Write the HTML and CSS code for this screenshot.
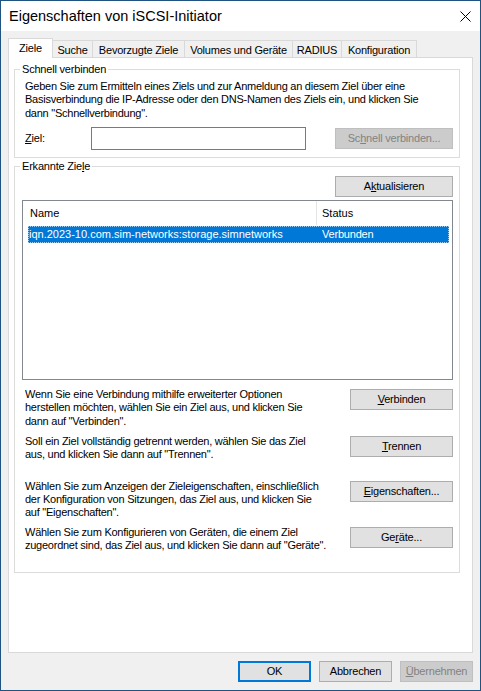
FILE: index.html
```html
<!DOCTYPE html>
<html lang="de">
<head>
<meta charset="utf-8">
<title>Eigenschaften von iSCSI-Initiator</title>
<link rel="stylesheet" href="styles.css">
</head>
<body>
<div class="window">
  <div class="titlebar">
    <span class="title">Eigenschaften von iSCSI-Initiator</span>
    <svg class="close" width="11" height="11" viewBox="0 0 11 11"><path d="M0.5 0.5 L10.5 10.5 M10.5 0.5 L0.5 10.5" stroke="#000" stroke-width="1" fill="none"/></svg>
  </div>
  <div class="body">
    <div class="tabs">
      <div class="tab active t-ziele">Ziele</div>
      <div class="tab t-suche">Suche</div>
      <div class="tab t-bev">Bevorzugte Ziele</div>
      <div class="tab t-vol">Volumes und Geräte</div>
      <div class="tab t-rad">RADIUS</div>
      <div class="tab t-konf">Konfiguration</div>
    </div>
    <div class="panel">
      <fieldset class="group quick">
        <legend>Schnell verbinden</legend>
        <p class="desc">Geben Sie zum Ermitteln eines Ziels und zur Anmeldung an diesem Ziel über eine<br>Basisverbindung die IP-Adresse oder den DNS-Namen des Ziels ein, und klicken Sie<br>dann "Schnellverbindung".</p>
        <div class="ziel-row">
          <span class="ziel-label"><u>Z</u>iel:</span>
          <div class="input"></div>
          <button class="btn btn-wide disabled">Sc<u>h</u>nell verbinden...</button>
        </div>
      </fieldset>
      <fieldset class="group found">
        <legend>Erkannte Zie<u>l</u>e</legend>
        <div class="refresh-row"><button class="btn btn-wide">A<u>k</u>tualisieren</button></div>
        <div class="list">
          <div class="list-head">
            <div class="head-name">Name</div>
            <div class="head-status">Status</div>
          </div>
          <div class="list-row">
            <span class="row-name">iqn.2023-10.com.sim-networks:storage.simnetworks</span>
            <span class="row-status">Verbunden</span>
          </div>
        </div>
        <div class="action r1">
          <p class="desc">Wenn Sie eine Verbindung mithilfe erweiterter Optionen<br>herstellen möchten, wählen Sie ein Ziel aus, und klicken Sie<br>dann auf "Verbinden".</p>
          <button class="btn btn-action"><u>V</u>erbinden</button>
        </div>
        <div class="action r2">
          <p class="desc">Soll ein Ziel vollständig getrennt werden, wählen Sie das Ziel<br>aus, und klicken Sie dann auf "Trennen".</p>
          <button class="btn btn-action"><u>T</u>rennen</button>
        </div>
        <div class="action r3">
          <p class="desc">Wählen Sie zum Anzeigen der Zieleigenschaften, einschließlich<br>der Konfiguration von Sitzungen, das Ziel aus, und klicken Sie<br>auf "Eigenschaften".</p>
          <button class="btn btn-action"><u>E</u>igenschaften...</button>
        </div>
        <div class="action r4">
          <p class="desc">Wählen Sie zum Konfigurieren von Geräten, die einem Ziel<br>zugeordnet sind, das Ziel aus, und klicken Sie dann auf "Geräte".</p>
          <button class="btn btn-action">Ge<u>r</u>äte...</button>
        </div>
      </fieldset>
    </div>
    <div class="footer">
      <button class="btn btn-foot default">OK</button>
      <button class="btn btn-foot">Abbrechen</button>
      <button class="btn btn-foot disabled"><u>Ü</u>bernehmen</button>
    </div>
  </div>
</div>
</body>
</html>
```
FILE: styles.css
```css
html, body {
  margin: 0;
  padding: 0;
  background: #ffffff;
}
body {
  font-family: "Liberation Sans", Arial, sans-serif;
  color: #000;
}
.window {
  width: 481px;
  height: 691px;
  box-sizing: border-box;
  border: 1px solid #1f5482;
  display: flex;
  flex-direction: column;
  background: #f0f0f0;
}
.titlebar {
  height: 30px;
  flex-shrink: 0;
  background: #ffffff;
  display: flex;
  align-items: center;
  padding-left: 8px;
}
.title {
  flex: 1;
  font-size: 14.5px;
  line-height: 30px;
}
.close {
  display: block;
  margin-right: 9px;
}
.body {
  flex: 1;
  display: flex;
  flex-direction: column;
  padding: 7px 7px 8px 7px;
  min-height: 0;
}
.tabs {
  display: flex;
  align-items: flex-end;
  height: 19px;
  flex-shrink: 0;
}
.tab {
  box-sizing: border-box;
  height: 17px;
  border: 1px solid #d9d9d9;
  border-bottom: none;
  background: #f0f0f0;
  font-size: 11px;
  letter-spacing: -0.2px;
  line-height: 18px;
  text-align: center;
  margin-left: -1px;
  overflow: hidden;
  white-space: nowrap;
}
.tab.active {
  height: 20px;
  background: #ffffff;
  margin-bottom: -1px;
  margin-left: 0;
  position: relative;
  z-index: 1;
}
.t-ziele { width: 45px; }
.t-suche { width: 41px; }
.t-bev { width: 93px; }
.t-vol { width: 109px; }
.t-rad { width: 50px; }
.t-konf { width: 76px; }
.panel {
  flex: 1;
  background: #ffffff;
  border: 1px solid #d9d9d9;
  display: flex;
  flex-direction: column;
  min-height: 0;
}
.group {
  margin: 0 12px 0 5px;
  border: 1px solid #dcdcdc;
  min-width: 0;
}
.group legend {
  font-size: 11px;
  line-height: 13px;
  letter-spacing: -0.2px;
  padding: 0 2px;
  margin-left: -5px;
}
.quick {
  margin-top: 5px;
  padding: 4px 6px 7px 10px;
}
.found {
  margin-top: 2px;
  padding: 3px 6px 20px 10px;
}
.desc {
  margin: 0;
  font-size: 11px;
  line-height: 13.33px;
  letter-spacing: -0.25px;
  white-space: nowrap;
}
.ziel-row {
  display: flex;
  align-items: center;
  height: 23px;
  margin-top: 7px;
}
.ziel-label {
  width: 66px;
  font-size: 11px;
  letter-spacing: -0.2px;
}
.input {
  width: 215px;
  height: 23px;
  box-sizing: border-box;
  border: 1px solid #7a7a7a;
  background: #ffffff;
}
.btn {
  box-sizing: border-box;
  height: 21px;
  padding: 0;
  margin: 0;
  border: 1px solid #adadad;
  background: #e1e1e1;
  font-family: "Liberation Sans", Arial, sans-serif;
  font-size: 11px;
  letter-spacing: -0.2px;
  color: #000;
  line-height: 19px;
  white-space: nowrap;
}
.btn.disabled {
  background: #cccccc;
  border-color: #bfbfbf;
  color: #838383;
}
.btn-wide {
  width: 118px;
  margin-left: auto;
}
.refresh-row {
  display: flex;
  justify-content: flex-end;
}
.list {
  margin-top: 3px;
  margin-left: -3px;
  width: 431px;
  height: 180px;
  box-sizing: border-box;
  border: 1px solid #828790;
  background: #ffffff;
  font-size: 11px;
}
.list-head {
  display: flex;
  height: 24px;
  line-height: 24px;
}
.head-name {
  box-sizing: border-box;
  width: 294px;
  padding-left: 7px;
  border-right: 1px solid #e5e5e5;
}
.head-status {
  padding-left: 5px;
}
.list-row {
  display: flex;
  box-sizing: border-box;
  height: 17px;
  margin: 1px 3px 0 5px;
  background: #0078d7;
  color: #ffffff;
  border: 1px dotted #9fd0f5;
  line-height: 15px;
  white-space: nowrap;
}
.row-name {
  width: 293px;
}
.row-status {
  letter-spacing: -0.2px;
}
.action {
  display: flex;
  justify-content: space-between;
  align-items: flex-start;
}
.r1 { margin-top: 8px; }
.r2 { margin-top: 7px; }
.r3 { margin-top: 18px; }
.r4 { margin-top: 6px; }
.btn-action {
  width: 103px;
  margin-top: 1px;
  flex-shrink: 0;
}
.footer {
  display: flex;
  justify-content: flex-end;
  gap: 8px;
  margin-top: 8px;
  flex-shrink: 0;
}
.btn-foot {
  width: 73px;
  height: 21px;
}
.btn-foot.default {
  border: 2px solid #0078d7;
  line-height: 17px;
}
```
